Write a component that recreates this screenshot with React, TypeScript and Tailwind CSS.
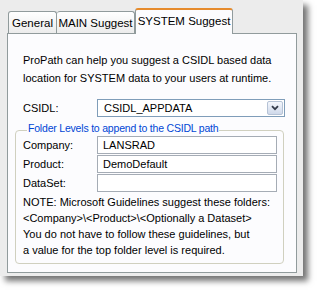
import React from "react";

const font = { fontFamily: '"Liberation Sans", Arial, sans-serif' };

export default function App() {
  return (
    <div className="w-[318px] h-[290px] bg-white overflow-hidden" style={font}>
      <div className="w-[303px] h-[276px] bg-[#ececec] pl-[7px] pt-[8px] shadow-[5px_5px_6px_rgba(0,0,0,0.55)] text-[11px] text-black whitespace-nowrap">
        {/* tab strip */}
        <div className="flex items-end h-[25px] w-[290px]">
          <div className="ml-[1px] h-[22px] w-[49px] border border-b-0 border-[#919b9c] rounded-t-[3px] bg-gradient-to-b from-white to-[#ececec] flex items-center justify-center leading-none pt-[2px] text-[11.5px]">
            General
          </div>
          <div className="h-[22px] w-[78px] border border-b-0 border-l-0 border-[#919b9c] rounded-t-[3px] bg-gradient-to-b from-white to-[#ececec] flex items-center justify-center leading-none pt-[2px] text-[11.5px]">
            MAIN Suggest
          </div>
          <div className="relative z-10 -mb-[1px] h-[26px] w-[98px] border border-b-0 border-[#919b9c] border-t-[#e68b2c] border-t-2 rounded-t-[3px] bg-[#fcfcfe] flex items-center justify-center leading-none text-[11.5px]">
            SYSTEM Suggest
          </div>
        </div>
        {/* panel */}
        <div className="w-[290px] h-[240px] border border-[#919b9c] bg-[#fcfcfe] pt-[17px]">
          <div className="pl-[15px] leading-[18px]">
            <div>ProPath can help you suggest a CSIDL based data</div>
            <div>location for SYSTEM data to your users at runtime.</div>
          </div>
          <div className="mt-[12px] flex items-center pl-[15px]">
            <div className="w-[74px]">CSIDL:</div>
            <div className="w-[188px] h-[18px] border border-[#7f9db9] bg-white flex items-center">
              <div className="flex-1 pl-[6px] leading-none">CSIDL_APPDATA</div>
              <div className="w-[16px] h-[14px] mr-[1px] rounded-[2px] border border-[#b6c3d6] bg-gradient-to-b from-[#f4f7fc] to-[#cfd9ea] flex items-center justify-center">
                <svg width="8" height="6" viewBox="0 0 8 6">
                  <path d="M1 1.2 L4 4.2 L7 1.2" fill="none" stroke="#333b4a" strokeWidth="1.8" />
                </svg>
              </div>
            </div>
          </div>
          <div className="mt-[13px] ml-[7px] w-[269px] h-[134px] border border-[#d0d0bf] rounded-[4px] pl-[7px] pr-[5px]">
            <div className="-mt-[11px] h-[16px] leading-[16px]">
              <span className="ml-[4px] px-[1px] bg-[#fcfcfe] text-[#0046d5] text-[10.5px] tracking-[-0.2px]">Folder Levels to append to the CSIDL path</span>
            </div>
            <div className="flex flex-col gap-[1px]">
              {[
                ["Company:", "LANSRAD"],
                ["Product:", "DemoDefault"],
                ["DataSet:", ""],
              ].map(([l, v]) => (
                <div key={l} className="flex items-center">
                  <div className="w-[74px]">{l}</div>
                  <div className="w-[180px] h-[18px] border border-[#a5acb5] bg-white pl-[5px] leading-[16px]">{v}</div>
                </div>
              ))}
            </div>
            <div className="mt-[2px] leading-[16px]">
              <div>NOTE: Microsoft Guidelines suggest these folders:</div>
              <div>&lt;Company&gt;\&lt;Product&gt;\&lt;Optionally a Dataset&gt;</div>
              <div>You do not have to follow these guidelines, but</div>
              <div>a value for the top folder level is required.</div>
            </div>
          </div>
        </div>
      </div>
    </div>
  );
}
